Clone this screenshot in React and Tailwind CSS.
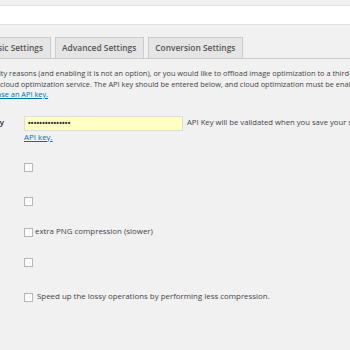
import React from 'react';

const tabs = ['Basic Settings', 'Advanced Settings', 'Conversion Settings'];

const Checkbox = () => (
    <span className="inline-block w-[9px] h-[9px] border border-[#b4b9be] bg-[#fbfbfb] shrink-0"></span>
);

const App = () => {
    return (
        <div className="w-[350px] h-[350px] overflow-hidden bg-[#f1f1f1] text-[#444] relative" style={{ fontFamily: '"Open Sans", sans-serif' }}>
            {/* top bar */}
            <div className="mt-[5px] h-[20px] bg-white border-t border-b border-[#e2e2e2]"></div>

            {/* tabs */}
            <div className="mt-[12px] h-[22px] border-b border-[#ccc] flex items-end gap-[4px] -ml-[20px]">
                {tabs.map((t) => (
                    <div key={t} className="h-[21px] px-[6.5px] border border-b-0 border-[#ccc] bg-[#e5e5e5] text-[#555] text-[8.4px] font-semibold flex items-center whitespace-nowrap">
                        {t}
                    </div>
                ))}
            </div>

            {/* description */}
            <div className="mt-[9px] text-[7.4px] leading-[10.5px] whitespace-nowrap text-[#444]">
                <div className="-ml-[1px]">ity reasons (and enabling it is not an option), or you would like to offload image optimization to a third-party server, you may purchase</div>
                <div>cloud optimization service. The API key should be entered below, and cloud optimization must be enabled for each image type you would like optimized.</div>
                <div className="-ml-[23px]"><a className="text-[#0073aa] underline">Purchase an API key.</a></div>
            </div>

            {/* api key row */}
            <div className="mt-[16px] flex items-center relative">
                <span className="absolute left-[-116px] w-[120px] text-right whitespace-nowrap text-[7.9px] font-semibold text-[#222]">Cloud optimization API Key</span>
                <div className="ml-[24px] w-[159px] h-[15px] shrink-0 bg-[#ffffc4] border border-[#ddd] flex items-center pl-[3px] text-[7px] font-bold tracking-[0.2px] text-[#222] leading-none">
                    •••••••••••••••
                </div>
                <span className="ml-[4px] text-[7.7px] whitespace-nowrap">API Key will be validated when you save your settings.</span>
            </div>
            <div className="ml-[24px] mt-[1px] text-[7.9px] leading-[10px]">
                <a className="text-[#0073aa] underline">API key.</a>
            </div>

            {/* options */}
            <div className="ml-[24px] mt-[21px] flex flex-col">
                <div className="h-[9px] flex items-center"><Checkbox /></div>
                <div className="mt-[25px] h-[9px] flex items-center"><Checkbox /></div>
                <div className="mt-[22px] h-[9px] flex items-center gap-[2px]">
                    <Checkbox />
                    <span className="text-[7.9px] whitespace-nowrap">extra PNG compression (slower)</span>
                </div>
                <div className="mt-[21px] h-[9px] flex items-center"><Checkbox /></div>
                <div className="mt-[26px] h-[9px] flex items-center gap-[4px]">
                    <Checkbox />
                    <span className="text-[7.9px] whitespace-nowrap">Speed up the lossy operations by performing less compression.</span>
                </div>
            </div>
        </div>
    );
};

export default App;
